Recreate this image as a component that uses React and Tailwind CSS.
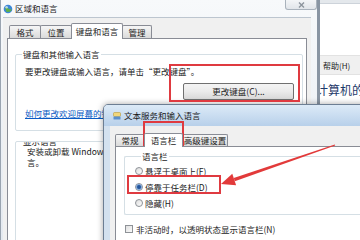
import React from 'react';

const Tab = ({ children, active, className }) => (
  <div
    className={
      (active
        ? 'relative z-10 -mb-px bg-white border border-b-0 border-[#898c95] '
        : 'bg-linear-to-b from-[#f6f6f6] to-[#dadada] border border-b-0 border-[#898c95] ') +
      'rounded-t-[2px] flex items-center justify-center text-[8.5px] leading-[9px] text-[#222] -ml-px first:ml-0 ' +
      className
    }
  >
    {children}
  </div>
);

const GroupBox = ({ label, className, children }) => (
  <div className={'border border-[#d5dfe5] rounded-[2px] flex flex-col ' + className}>
    <div className="-mt-[5px] ml-[6px] w-fit px-[1px] bg-white text-[8.5px] leading-[9px] text-[#222]">{label}</div>
    {children}
  </div>
);

const Radio = ({ checked }) => (
  <div className="w-[8px] h-[8px] rounded-full border border-[#8e9297] bg-linear-to-br from-[#dcdcdc] to-[#ffffff] flex items-center justify-center">
    {checked && <div className="w-[4px] h-[4px] rounded-full bg-[#23549b] ring-1 ring-[#7fa6d6]" />}
  </div>
);

const Checkbox = () => (
  <div className="w-[8px] h-[8px] border border-[#8e9297] bg-linear-to-br from-[#e0e0e0] to-[#fafafa]" />
);

const App = () => {
  return (
    <div className="relative w-[360px] h-[240px] overflow-hidden bg-white font-['Noto_Sans_CJK_SC','Noto_Sans',sans-serif]">
      {/* window behind, only a strip shows on the right */}
      <div className="absolute left-[280px] top-0 w-[80px] h-full bg-white flex flex-col">
        <div className="h-[4px] bg-[#e4e8ec] border-b border-[#cdd3da]" />
        <div className="mt-[51px] h-[20px] bg-[#f0f0f0] border-y border-[#e2e2e2] flex items-center pl-[43px] text-[8px] leading-[9px] text-[#222]">
          帮助(H)
        </div>
        <div className="mt-[8px] pl-[12px] whitespace-nowrap text-[12px] leading-[14px] text-[#1e3a6a]">调整计算机的设置</div>
      </div>

      {/* 区域和语言 */}
      <div className="absolute left-0 top-0 w-[320px] h-[260px] flex flex-col bg-linear-to-b from-[#f7f9fb] to-[#e2e8ef] border-l border-r-[3px] border-l-[#9aa4b0] border-r-[#8995a3]">
        <div className="relative h-[17px] flex items-center pl-[2px]">
          <svg width="10" height="10" viewBox="0 0 10 10">
            <circle cx="5" cy="5" r="4.3" fill="#3d87d6" />
            <path d="M2 3.5 Q4 2 5 4 Q6 6 8 5 L8.5 6.5 Q6 8.5 3.5 8 Z" fill="#5fb04a" />
            <circle cx="3.6" cy="3.2" r="1.3" fill="#cfe6fb" opacity="0.8" />
          </svg>
          <span className="ml-[2px] text-[8.5px] leading-[9px] text-[#1b1b1b]">区域和语言</span>
          <div className="absolute right-0 top-0 w-[32px] h-[10px] border border-t-0 border-[#a9b2bc] rounded-b-[3px] bg-linear-to-b from-[#f3f5f7] to-[#e1e5ea] flex items-center justify-center">
            <svg width="7" height="6" viewBox="0 0 7 6">
              <path d="M1 0.5 L6 5.5 M6 0.5 L1 5.5" stroke="#8c949d" strokeWidth="1.4" />
            </svg>
          </div>
        </div>
        <div className="flex-1 ml-[2px] mr-[6px] bg-[#f0f0f0] border-t border-[#bcc5cf] px-[4px] pt-[4px] flex flex-col">
          <div className="flex items-end ml-[2px] h-[16px]">
            <Tab className="w-[32px] h-[13px]">格式</Tab>
            <Tab className="w-[32px] h-[13px]">位置</Tab>
            <Tab active className="w-[52px] h-[16px]">键盘和语言</Tab>
            <Tab className="w-[30px] h-[13px]">管理</Tab>
          </div>
          <div className="flex-1 bg-white border border-[#898c95] pl-[7px] pr-[3px] pt-[15px] flex flex-col">
            <GroupBox label="键盘和其他输入语言" className="h-[77px]">
              <div className="mt-[8px] pl-[9px] text-[8.5px] leading-[9px] text-[#222] whitespace-nowrap">
                要更改键盘或输入语言，请单击“更改键盘”。
              </div>
              <div className="mt-[7px] self-end mr-[8px] w-[111px] h-[17px] border border-[#707070] rounded-[2px] bg-linear-to-b from-[#f4f4f4] via-[#ebebeb] to-[#d9d9d9] flex items-center justify-center text-[8.5px] leading-[9px] text-[#222]">
                更改键盘(C)...
              </div>
              <div className="mt-[9px] pl-[9px] text-[8.5px] leading-[9px] text-[#0a5bc4] underline whitespace-nowrap">
                如何更改欢迎屏幕的键盘布局？
              </div>
            </GroupBox>
            <GroupBox label="显示语言" className="mt-[10px] flex-1 overflow-hidden">
              <div className="pl-[11px] text-[8.5px] leading-[11px] text-[#222] whitespace-nowrap">
                安装或卸载 Windows 可以用于显示文本以及识别语音和手写的语
                <br />
                言。
              </div>
            </GroupBox>
          </div>
        </div>
      </div>

      {/* 文本服务和输入语言 */}
      <div className="absolute left-[103px] top-[104px] w-[280px] h-[160px] flex flex-col bg-[#d3e1ef] border border-[#6c7e93] rounded-tl-[5px] shadow-[0_0_6px_rgba(0,0,0,0.35)]">
        <div className="h-[21px] flex items-center pl-[9px] bg-linear-to-b from-[#dceaf7] to-[#b8d0ea] rounded-tl-[4px]">
          <svg width="8" height="8" viewBox="0 0 8 8">
            <rect x="0.5" y="0.5" width="7" height="4" rx="1" fill="#f1d67a" stroke="#b89a3a" strokeWidth="0.6" />
            <rect x="0.5" y="4.5" width="7" height="3" rx="0.6" fill="#5b8fcc" />
          </svg>
          <span className="ml-[3px] text-[8.5px] leading-[9px] text-[#1b1b1b]">文本服务和输入语言</span>
        </div>
        <div className="flex-1 ml-[6px] bg-[#f0f0f0] pl-[5px] pt-[6px] flex flex-col">
          <div className="flex items-end h-[14px]">
            <Tab className="w-[30px] h-[12px]">常规</Tab>
            <Tab active className="w-[39px] h-[14px]">语言栏</Tab>
            <Tab className="w-[46px] h-[12px]">高级键设置</Tab>
          </div>
          <div className="flex-1 bg-white border border-r-0 border-[#898c95] pl-[8px] pt-[9px] flex flex-col text-[8.5px] leading-[9px] text-[#222]">
            <GroupBox label="语言栏" className="border-r-0 pl-[10px] pb-[3px]">
              <div className="mt-[2px] h-[16px] flex items-center gap-[2px]">
                <Radio />
                <span>悬浮于桌面上(F)</span>
              </div>
              <div className="h-[16px] flex items-center gap-[2px]">
                <Radio checked />
                <span>停靠于任务栏(D)</span>
              </div>
              <div className="h-[16px] flex items-center gap-[2px]">
                <Radio />
                <span>隐藏(H)</span>
              </div>
            </GroupBox>
            <div className="mt-[7px] ml-[1px] h-[14px] flex items-center gap-[3px] whitespace-nowrap">
              <Checkbox />
              <span>非活动时，以透明状态显示语言栏(N)</span>
            </div>
            <div className="mt-[3px] ml-[1px] h-[14px] flex items-center gap-[3px] whitespace-nowrap">
              <Checkbox />
              <span>在任务栏中显示其他语言栏图标(A)</span>
            </div>
          </div>
        </div>
      </div>

      {/* red annotations */}
      <div className="absolute left-[169px] top-[64px] w-[131px] h-[38px] border-2 border-[#df3a40]" />
      <div className="absolute left-[143px] top-[121px] w-[41px] h-[25px] border-2 border-[#df3a40]" />
      <div className="absolute left-[127px] top-[175px] w-[94px] h-[19px] border-2 border-[#df3a40]" />
      <svg className="absolute left-0 top-0" width="360" height="240" viewBox="0 0 360 240">
        <polygon points="335.2,145.5 334.8,144.5 233.7,177.9 234.8,181.2" fill="#e23a3a" />
        <polygon points="221,184 232.3,173.8 236.1,185.2" fill="#e23a3a" />
      </svg>
    </div>
  );
};

export default App;
